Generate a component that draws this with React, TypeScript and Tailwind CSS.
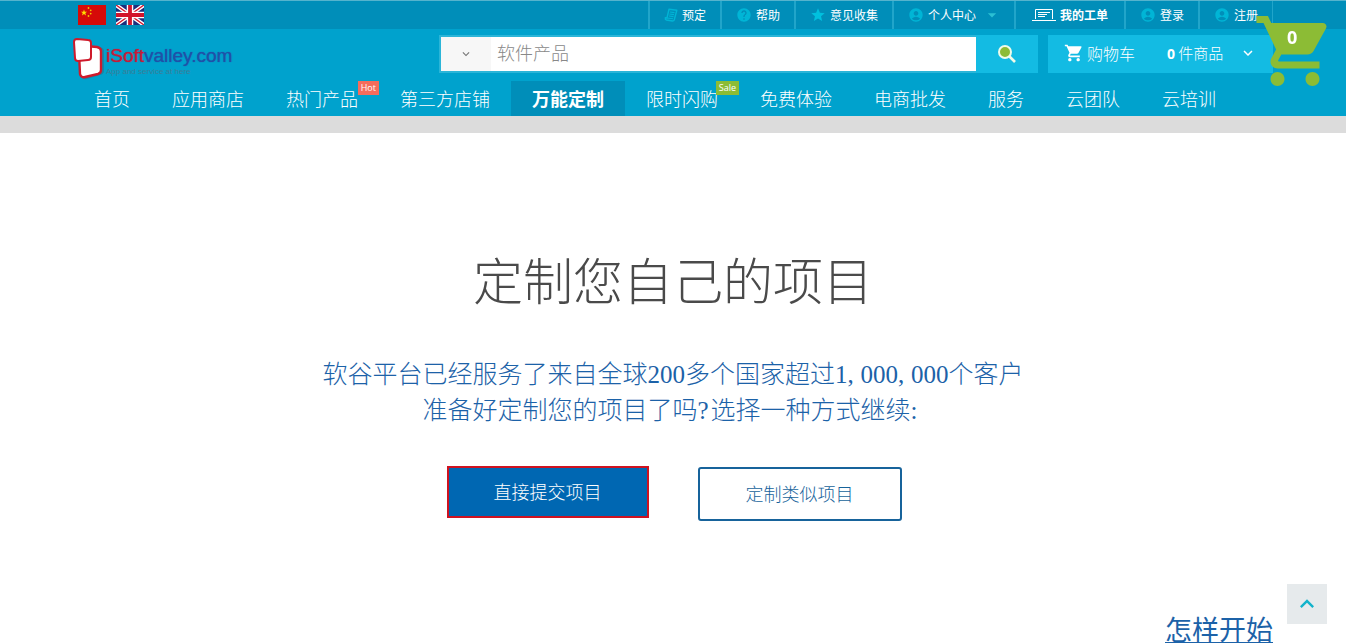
import clsx from "clsx";
import type { ReactNode } from "react";
import {
  MdAccountCircle,
  MdArrowDropDown,
  MdHelp,
  MdKeyboardArrowDown,
  MdKeyboardArrowUp,
  MdShoppingCart,
  MdStar,
} from "react-icons/md";

type NavItem = {
  label: string;
  active?: boolean;
  badge?: "Hot" | "Sale";
};

const navItems: NavItem[] = [
  { label: "首页" },
  { label: "应用商店" },
  { label: "热门产品", badge: "Hot" },
  { label: "第三方店铺" },
  { label: "万能定制", active: true },
  { label: "限时闪购", badge: "Sale" },
  { label: "免费体验" },
  { label: "电商批发" },
  { label: "服务" },
  { label: "云团队" },
  { label: "云培训" },
];

function ChinaFlag() {
  return (
    <svg viewBox="0 0 28 20" className="h-5 w-7">
      <rect width="28" height="20" fill="#d60a08" />
      <path
        d="M6 4.5l.8 2.2h2.3L7.3 8.1l.7 2.3L6 9l-2 1.4.7-2.3-1.8-1.4h2.3z"
        fill="#ffe000"
      />
      <g fill="#f2c500">
        <circle cx="10.5" cy="3" r="0.9" />
        <circle cx="12.7" cy="5.3" r="0.9" />
        <circle cx="12.7" cy="8.6" r="0.9" />
        <circle cx="10.5" cy="11" r="0.9" />
      </g>
    </svg>
  );
}

function UkFlag() {
  return (
    <svg viewBox="0 0 28 20" className="h-5 w-7">
      <rect width="28" height="20" fill="#1b2f7e" />
      <path d="M0 0l28 20M28 0L0 20" stroke="#fff" strokeWidth="4" />
      <path d="M0 0l28 20M28 0L0 20" stroke="#d2152c" strokeWidth="1.4" />
      <path d="M14 0v20M0 10h28" stroke="#fff" strokeWidth="6.5" />
      <path d="M14 0v20M0 10h28" stroke="#d2152c" strokeWidth="3.8" />
    </svg>
  );
}

function LogoMark() {
  return (
    <svg viewBox="0 0 32 44" className="h-11 w-8 shrink-0" strokeLinejoin="round">
      <path
        d="M9 14l18-4q4 1 4 4v20q0 3-4 4l-13 4q-4 1-6-3z"
        fill="#2b6f8c"
        opacity="0.6"
      />
      <path
        d="M10 10q1-1 3-1l11 1q4 1 4 4v19q0 3-3 4l-13 3q-4 1-5-3L6 16z"
        fill="#fff"
        stroke="#cf1a2b"
        strokeWidth="2.4"
      />
      <path
        d="M4 2l11 1q3 0 3 3v14q0 3-3 3L5 24q-3 0-3-3L1 5q0-3 3-3z"
        fill="#fff"
        stroke="#cf1a2b"
        strokeWidth="2"
      />
    </svg>
  );
}

function BookIcon() {
  return (
    <svg viewBox="0 0 14 14" className="size-3.5" fill="none" stroke="currentColor">
      <path d="M5 1.2l7.8 1-2.600 9.800Q9.800 13 8.500 13L2.500 12Q1 11.500 1.300 9.800L3 10z" strokeWidth="1.400" strokeLinejoin="round" />
      <path d="M6 4l4.500.6M5.500 6l4.500.6M5 8l4.500.6M3 10l6 .8" strokeWidth="1.100" />
    </svg>
  );
}

function LaptopIcon() {
  return (
    <svg viewBox="0 0 24 14" className="h-3.5 w-6" fill="none" stroke="#fff">
      <path d="M3.5 11V1.5h17V11M0 12.5h24" />
      <path d="M6 4.5h12M6 6.5h9M6 8.5h7" />
    </svg>
  );
}

function SearchIcon() {
  return (
    <svg viewBox="0 0 20 20" className="size-5">
      <path d="M12 12l6 6" stroke="#f2fbe8" strokeWidth="2.6" />
      <circle cx="8" cy="8" r="6" fill="#8cbc35" stroke="#eefbe9" strokeWidth="2" />
    </svg>
  );
}

function TopLink({
  icon,
  children,
  className,
}: {
  icon: ReactNode;
  children: ReactNode;
  className?: string;
}) {
  return (
    <li className="border-l-2 border-[#21a5ca]">
      <a
        href="#"
        className={clsx("flex h-7 items-center gap-1 text-[12px] text-white", className ?? "px-3.5")}
      >
        {icon}
        {children}
      </a>
    </li>
  );
}

function TopBar() {
  const account = <MdAccountCircle className="size-4 text-[#00b5d6]" />;
  return (
    <div className="border-t border-[#55b3cd] bg-[#008eb9]">
      <div className="mx-auto flex h-7 max-w-[1200px] items-center justify-between">
        <div className="flex gap-2.5 pl-[5px]">
          <a href="#" aria-label="中文">
            <ChinaFlag />
          </a>
          <a href="#" aria-label="English">
            <UkFlag />
          </a>
        </div>
        <ul className="flex border-r border-[#21a5ca]">
          <TopLink icon={<span className="text-[#00b5d6]"><BookIcon /></span>}>预定</TopLink>
          <TopLink icon={<MdHelp className="size-4 text-[#00b5d6]" />}>帮助</TopLink>
          <TopLink icon={<MdStar className="size-4 text-[#00c0de]" />}>意见收集</TopLink>
          <TopLink icon={account} className="pr-3 pl-3.5">
            个人中心
            <MdArrowDropDown className="ml-0.5 size-5 text-[#2bc0d4]" />
          </TopLink>
          <TopLink icon={<LaptopIcon />} className="px-4 font-bold">
            我的工单
          </TopLink>
          <TopLink icon={account}>登录</TopLink>
          <TopLink icon={account}>注册</TopLink>
        </ul>
      </div>
    </div>
  );
}

function Badge({ kind }: { kind: "Hot" | "Sale" }) {
  return (
    <span
      className={clsx(
        "absolute top-0 right-0 flex h-3.5 items-center px-[3px] font-['Open_Sans',sans-serif] text-[9px] text-white",
        kind === "Hot" ? "bg-[#f56c5c]" : "bg-[#8cbc35]",
      )}
    >
      {kind}
    </span>
  );
}

function Header() {
  return (
    <header className="bg-[#00a2cd]">
      <TopBar />
      <div className="mx-auto flex h-[52px] max-w-[1200px] items-start gap-2.5 pt-1.5">
        <a href="#" className="flex flex-1 items-start gap-px pt-0.5">
          <LogoMark />
          <span className="block pt-[7px] font-['Liberation_Sans',sans-serif]">
            <span className="block text-[19px] leading-6 text-[#1f51a8] [text-shadow:0_0_1px_currentColor]">
              <span className="text-[#c41b3a]">iSoft</span>valley.com
            </span>
            <span className="block text-[8px] leading-2 text-[#3c7c96]">App and service at here</span>
          </span>
        </a>
        <form className="flex h-[38px] w-[599px] border-2 border-r-0 border-[#2bb5d8] bg-white">
          <button
            type="button"
            aria-label="选择分类"
            className="flex w-[50px] items-center justify-center bg-[#f7f7f7]"
          >
            <MdKeyboardArrowDown className="size-3.5 text-[#777]" />
          </button>
          <input
            type="text"
            aria-label="搜索"
            placeholder="软件产品"
            className="min-w-0 flex-1 bg-white px-1.5 pb-1 text-[18px] font-light outline-none placeholder:text-[#888]"
          />
          <button
            type="submit"
            aria-label="搜索"
            className="-my-0.5 flex w-[62px] items-center justify-center bg-[#13bbe3]"
          >
            <SearchIcon />
          </button>
        </form>
        <button
          type="button"
          className="flex h-[38px] w-[225px] items-center bg-[#13bbe3] px-4 pb-0.5 text-[16px] font-light text-white"
        >
          <MdShoppingCart className="size-5" />
          <span className="ml-[3px]">购物车</span>
          <span className="ml-8 text-[15px]">
            <b className="font-['Open_Sans',sans-serif] text-[14px] font-bold">0</b> 件商品
          </span>
          <MdKeyboardArrowDown className="ml-auto size-[18px]" />
        </button>
      </div>
      <nav>
        <ul className="mx-auto flex max-w-[1200px]">
          {navItems.map((item) => (
            <li key={item.label} className="relative">
              <a
                href="#"
                className={clsx(
                  "flex h-[35px] items-center px-[21px] text-[18px] text-white",
                  item.active ? "bg-[#008eb9] font-bold" : "font-light",
                )}
              >
                {item.label}
              </a>
              {item.badge && <Badge kind={item.badge} />}
            </li>
          ))}
        </ul>
      </nav>
    </header>
  );
}

// Figures inside Chinese copy are set in half-width serif digits
function Figure({ children }: { children: ReactNode }) {
  return <span className="font-['Liberation_Serif',serif] leading-none">{children}</span>;
}

function Mark({ children }: { children: ReactNode }) {
  return <span className="inline-block w-[13px] text-left leading-none">{children}</span>;
}

export default function App() {
  return (
    <div className="bg-white font-['Noto_Sans_CJK_SC',sans-serif]">
      <Header />
      <div className="h-[17px] bg-[#dcdcdc]" />

      <main className="mx-auto max-w-[1200px] pt-[113px] text-center">
        <h1 className="text-[50px] leading-[64px] font-light text-[#4a4a4a]">定制您自己的项目</h1>
        <p className="mt-11 text-[25px] leading-9 font-light text-[#1c62a8]">
          软谷平台已经服务了来自全球<Figure>200</Figure>多个国家超过
          <Figure>
            1<Mark>,</Mark>000<Mark>,</Mark>000
          </Figure>
          个客户
          <br />
          准备好定制您的项目了吗
          <Figure>
            <Mark>?</Mark>
          </Figure>
          选择一种方式继续
          <Figure>
            <Mark>:</Mark>
          </Figure>
        </p>
        <div className="mt-10 flex justify-center gap-[49px] pl-0.5 text-[18px] font-light">
          <button
            type="button"
            className="h-[52px] w-[202px] border-2 border-[#cf1220] bg-[#0067b2] pb-0.5 text-white"
          >
            直接提交项目
          </button>
          <button
            type="button"
            className="mt-px h-[54px] w-[204px] rounded-[3px] border-2 border-[#17639b] pb-0.5 text-[#17639b]"
          >
            定制类似项目
          </button>
        </div>
        <div className="flex justify-end pt-[94px]">
          <a href="#" className="text-[27px] leading-7 text-[#1c62a8] underline">
            怎样开始
          </a>
        </div>
      </main>

      <a href="#" aria-label="购物车" className="fixed top-[9px] right-[9px] block size-[84px]">
        <MdShoppingCart className="size-full text-[#8cbc35]" />
        <span className="absolute top-4 left-[34px] font-['Open_Sans',sans-serif] text-[18px] leading-6 font-bold text-white">
          0
        </span>
      </a>
      <button
        type="button"
        aria-label="返回顶部"
        className="fixed right-[19px] bottom-[19px] flex size-10 items-center justify-center bg-[#e6eaec] text-[#12b3cb]"
      >
        <MdKeyboardArrowUp className="size-7" />
      </button>
    </div>
  );
}
